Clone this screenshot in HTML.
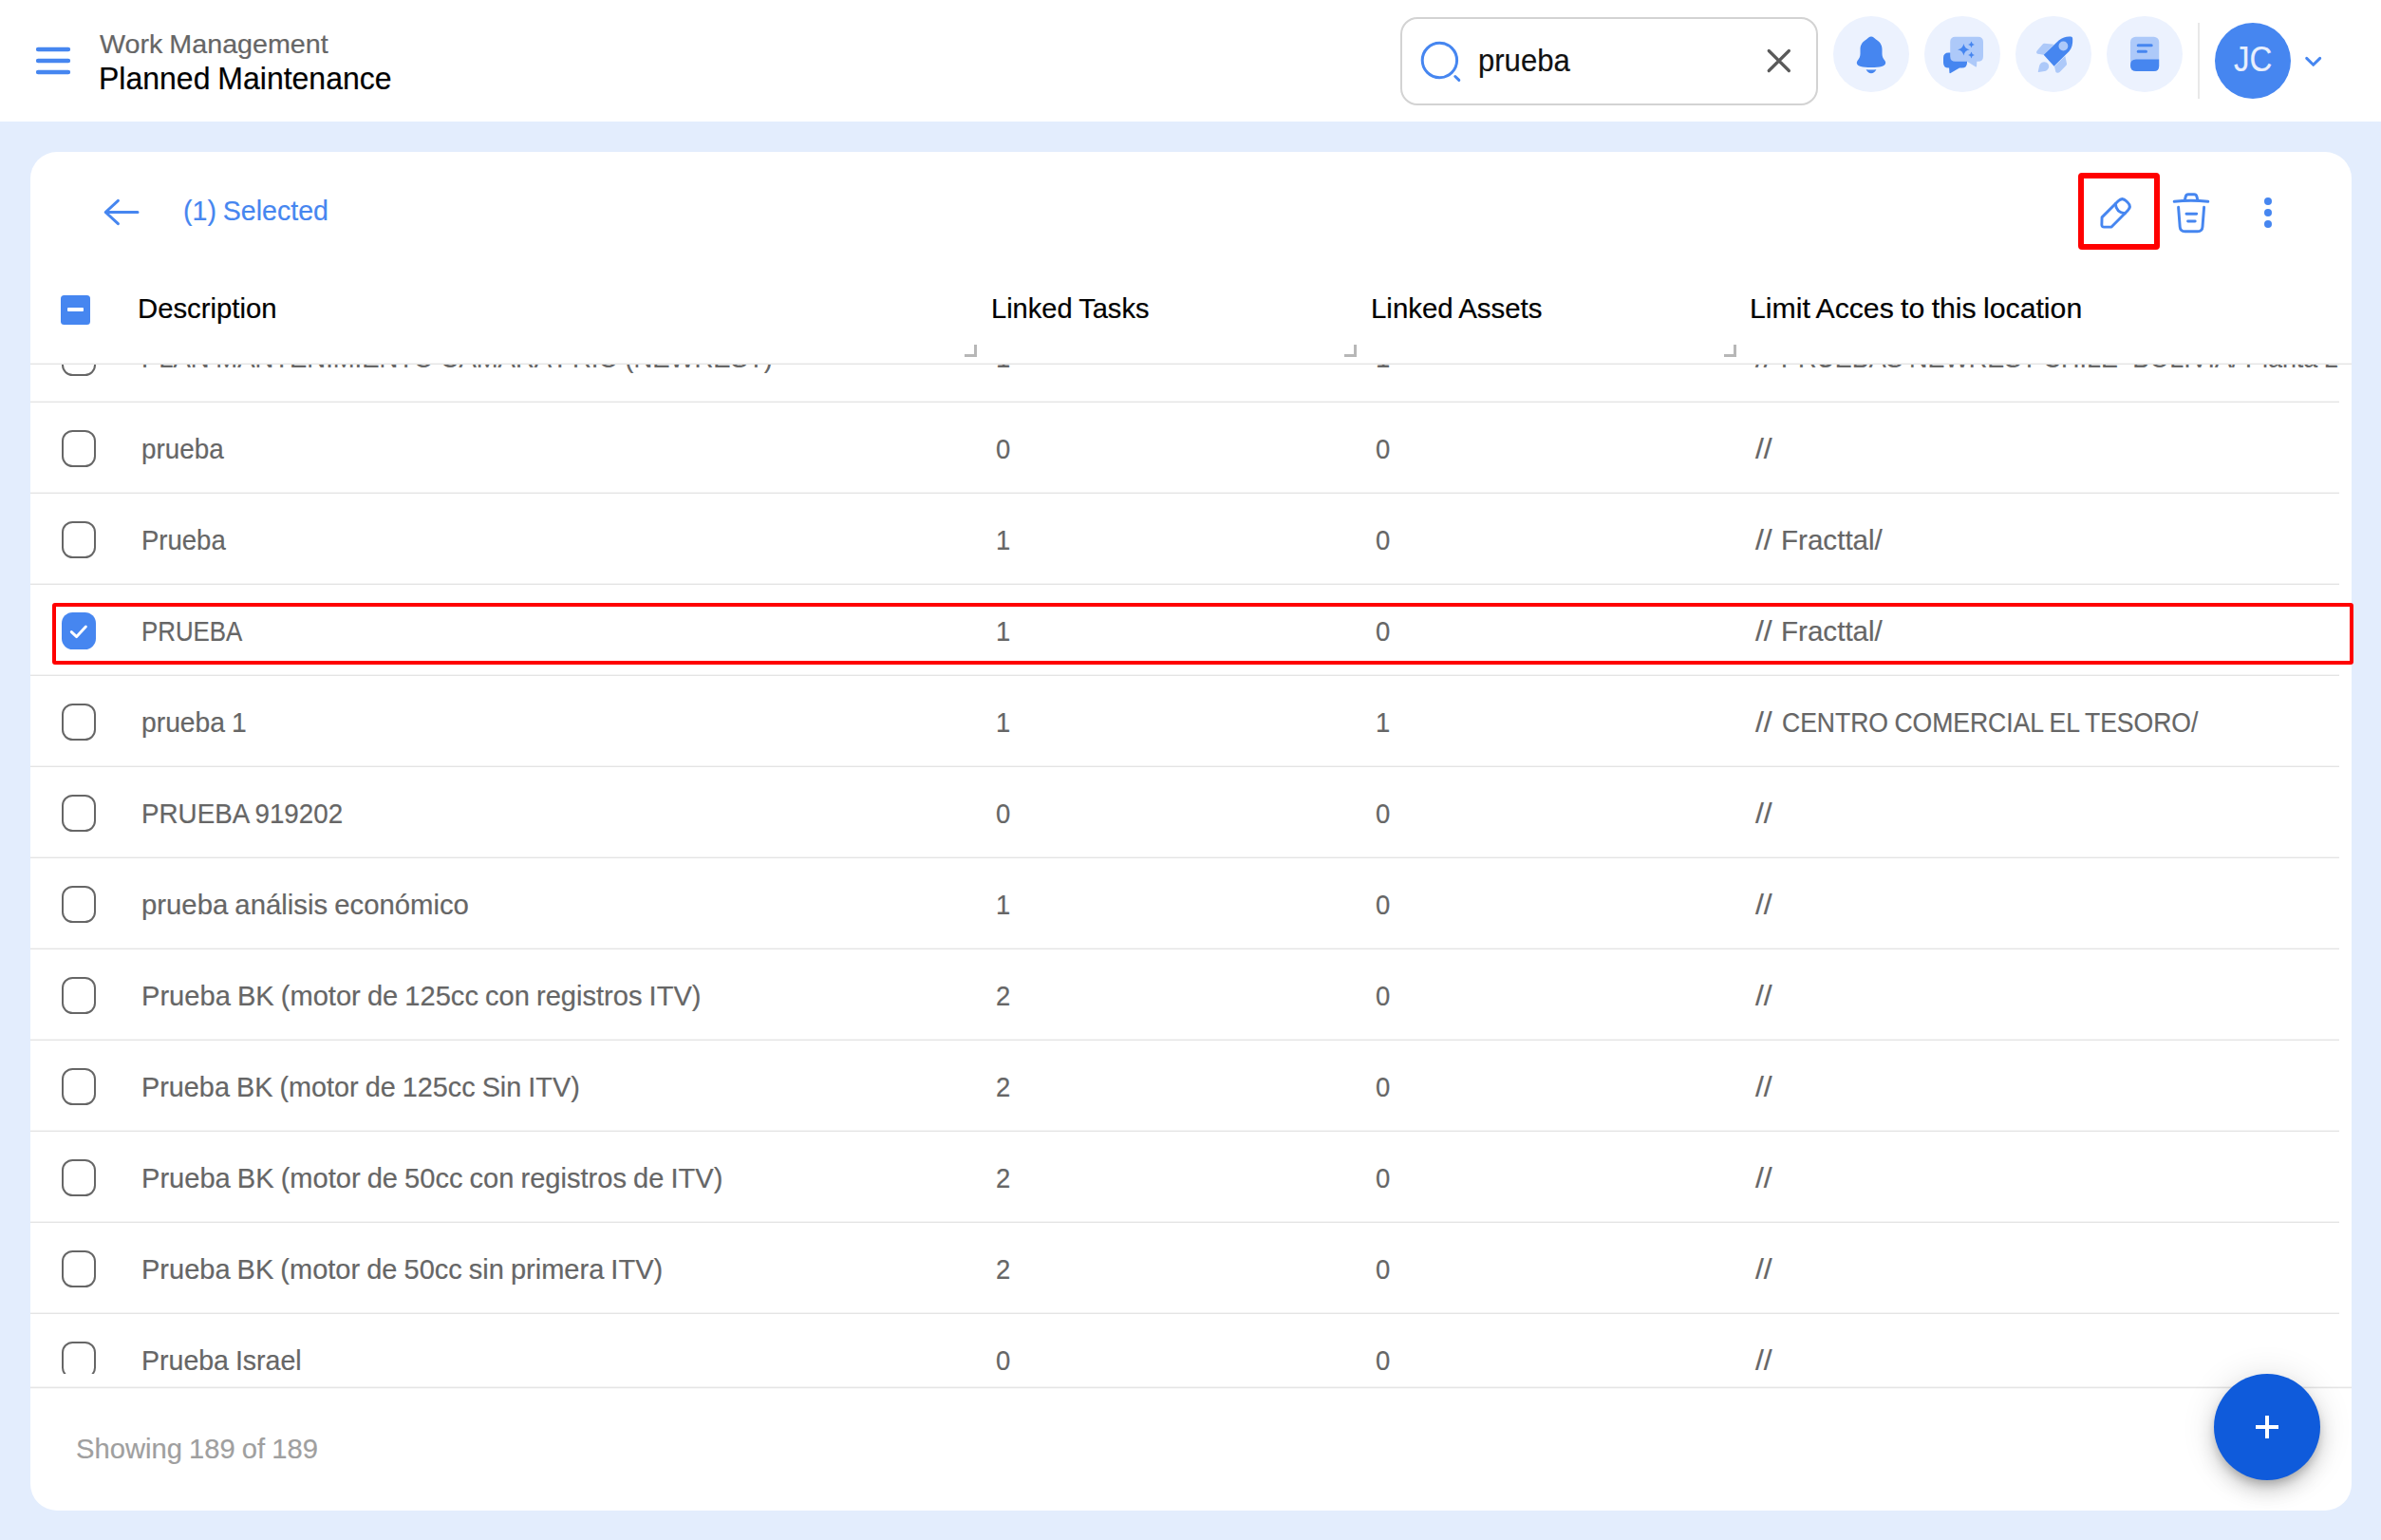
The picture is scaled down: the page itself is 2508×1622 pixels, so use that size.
<!DOCTYPE html>
<html lang="en">
<head>
<meta charset="utf-8">
<title>Planned Maintenance</title>
<style>
*{box-sizing:border-box;margin:0;padding:0}
html,body{width:2508px;height:1622px;overflow:hidden}
body{position:relative;background:#e3edfd;font-family:"Liberation Sans",sans-serif;color:#000}
.abs,.t,svg.i{position:absolute}
.t{white-space:nowrap;line-height:1;display:block;transform-origin:0 0;-webkit-text-stroke:.2px currentColor}
header{position:absolute;left:0;top:0;width:2508px;height:128px;background:#fff}
.search{position:absolute;left:1475px;top:17.5px;width:440px;height:93px;border:2px solid #d3d3d3;border-radius:18px;background:#fff}
.hc{position:absolute;top:17.1px;width:80px;height:80px}
.divider{position:absolute;left:2315px;top:24px;width:2px;height:80px;background:#e8e8e8}
.avatar{position:absolute;left:2333px;top:24px;width:80px;height:80px;border-radius:50%;background:#4686f0}
.card{position:absolute;left:32px;top:160px;width:2445px;height:1430.5px;border-radius:28px;background:#fff}
.hline{position:absolute;left:32px;width:2445px;height:2px;background:linear-gradient(#f5f5f5 50%,#e4e4e4 50%)}
.hline.f{height:3px;background:linear-gradient(#f5f5f5 33.3%,#e5e5e5 33.3% 66.6%,#f8f8f8 66.6%)}
.hcb{position:absolute;left:64.1px;top:310.7px;width:31px;height:31px;border-radius:3.5px;background:#4686f0}
.hcb i{position:absolute;left:6.7px;top:13.3px;width:17.6px;height:4.3px;background:#fff;border-radius:1px}
.rh{position:absolute;top:363px;width:12.800px;height:13px;border-right:3.900px solid #b7b7b7;border-bottom:3.900px solid #b7b7b7}
.tbody{position:absolute;left:0;top:0;width:2508px;height:1622px;clip-path:inset(384px 44px 175px 32px)}
.rows{position:absolute;left:32px;top:328px;width:2432px}
.row{position:absolute;left:0;width:2432px;height:96px;background:linear-gradient(#f5f5f5,#f5f5f5) 0 94px/100% 1px no-repeat,linear-gradient(#e4e4e4,#e4e4e4) 0 95px/100% 1px no-repeat}
.cb{position:absolute;left:33px;top:29.300px;width:36px;height:38.400px;border:2.2px solid #666;border-radius:11.5px;background:#fff}
.cb.on{border:0;background:#4686f0}
.cb svg{position:absolute;left:0;top:0}
.fab{position:absolute;left:2332.3px;top:1446.7px;width:112px;height:112px;border-radius:50%;background:#0f5bdb;box-shadow:0 6px 10px -2px rgba(0,0,0,.2),0 12px 20px 0 rgba(0,0,0,.14),0 2px 36px 0 rgba(0,0,0,.12)}
.fab i{position:absolute;background:#fff}
.hl{position:absolute;border-style:solid;border-color:#ff0000}
.t{word-spacing:-1.0px}
</style>
</head>
<body>
<header>
<svg class="i" style="left:32px;top:40.200px" width="48" height="48" viewBox="0 0 48 48"><path d="M8.100 12H39.900M8.100 24H39.900M8.100 36H39.900" stroke="#4686f0" stroke-width="4.500" stroke-linecap="round" fill="none"/></svg>
<span class="t" id="h1" style="left:105.4px;top:32.0px;font-size:28.3px;transform:scaleX(1.0135);color:#666;">Work Management</span>
<span class="t" id="h2" style="left:104.4px;top:66.7px;font-size:32.3px;transform:scaleX(0.9907);color:#000;">Planned Maintenance</span>
<div class="search">
<svg class="i" style="left:17px;top:21px" width="50" height="50" viewBox="0 0 50 50"><circle cx="22.4" cy="22.5" r="18.2" fill="none" stroke="#4686f0" stroke-width="3"/><path d="M38.800 39.500 42.800 43.400" stroke="#4686f0" stroke-width="3" stroke-linecap="round"/></svg>
<svg class="i" style="left:379px;top:26px" width="36" height="36" viewBox="0 0 36 36"><path d="M7.2 7.5 L28.4 28.5 M28.4 7.5 L7.2 28.5" stroke="#5a5a5a" stroke-width="3.2" stroke-linecap="round"/></svg>
</div>
<span class="t" id="q" style="left:1557.4px;top:47.5px;font-size:32.5px;transform:scaleX(0.9558);color:#111;">prueba</span>
<!-- bell -->
<svg class="hc" style="left:1931px" viewBox="-40 -40 80 80"><circle r="40" fill="#ecf2fe"/><path fill="#4686f0" d="M0-18.5C2-18.5 3.5-17 5-15.5 9-13 11.5-10 11.5-5V0C11.5 3 13 5 14.5 7 16 9.5 15 12 11 13 6 14.3-6 14.3-11 13-15 12-16 9.5-14.5 7-13 5-11.5 3-11.5 0V-5C-11.5-10-9-13-5-15.5-3.5-17-2-18.5 0-18.5Z"/><path fill="#4686f0" d="M-5.4 16.2Q0 17 5.4 16.2C4 19 2 20.2 0 20.2S-4 19-5.4 16.2Z"/></svg>
<!-- chat -->
<svg class="hc" style="left:2027px" viewBox="-40 -40 80 80"><circle r="40" fill="#ecf2fe"/><path fill="#4686f0" d="M-14.5-1.5H-0.5Q5-1.5 5 4V9Q5 14.5-0.5 14.5H-3L-12.4 20.1Q-13.6 20.6-13.6 19.3L-13.9 14.5H-14.5Q-20 14.5-20 9V4Q-20-1.5-14.500-1.5Z"/><path fill="#adc9f9" d="M-7.3-18.3H16.5Q22-18.3 22-12.800V2.3Q22 7.800 16.5 7.800H15.300L15.100 12.600Q15 13.900 13.800 13.300L5 7.800H-7.300Q-12.800 7.800-12.800 2.300V-12.800Q-12.800-18.300-7.300-18.300Z"/><path fill="#4686f0" d="M1.4-11Q2.300-5.600 7.700-4.700 2.300-3.800 1.400 1.600 .5-3.800-4.900-4.700 .5-5.600 1.400-11ZM9.500-13.500Q10-10.600 12.900-10.100 10-9.600 9.500-6.700 9-9.600 6.100-10.100 9-10.600 9.500-13.500ZM9.500-2.400Q10 .5 12.900 1 10 1.500 9.500 4.400 9 1.500 6.100 1 9 .5 9.500-2.400Z"/></svg>
<!-- rocket -->
<svg class="hc" style="left:2123px" viewBox="-40 -40 80 80"><circle r="40" fill="#ecf2fe"/><path fill="#adc9f9" d="M-9.500-11.300 .4-10.200-10.300 .8-16.500-.2Q-18.500-.6-17.800-2.800-17.500-3.500-16.500-4.500L-11.500-10.300Q-10.600-11.400-9.500-11.300ZM12.300 2 14 10Q14.200 11.100 13.500 11.800L6.500 19Q5.500 20 4 19.800 2.500 19.600 2.300 18.500L1 12.900ZM-15.600 18.900Q-16.500 19.400-16.100 17.700L-14.800 12C-13.700 7.800-8 6.600-5.500 10.500-3.700 13.500-5.500 17.200-9.500 18.100Z"/><path fill="#4686f0" d="M-10.300 .8 5.600-14.400C9.500-17.800 14-18.700 18-18.400 19.600-18.300 20.200-17.400 20.200-15.800 20.400-11 19.500-6.500 16.500-3L.6 12.800Z"/><circle cx="10.400" cy="-8.500" r="4.900" fill="#adc9f9"/></svg>
<!-- book -->
<svg class="hc" style="left:2219px" viewBox="-40 -40 80 80"><circle r="40" fill="#ecf2fe"/><rect x="-15" y="-18.300" width="30.200" height="36.300" rx="5.500" fill="#adc9f9"/><path fill="#4686f0" d="M15.200 5.500V12.500Q15.200 18 9.700 18H-9Q-15 18-15 11.800-15 5.500-9 5.500Z"/><path d="M-6.800-9.200H7.200M-6.800-2.800H1.500" stroke="#4686f0" stroke-width="3" stroke-linecap="round" fill="none"/></svg>
<div class="divider"></div>
<div class="avatar"></div>
<span class="t" id="jc" style="left:2352.7px;top:44.1px;font-size:37px;transform:scaleX(0.8919);color:#e8effd;">JC</span>
<svg class="i" style="left:2424px;top:54px" width="26" height="22" viewBox="0 0 26 22"><path d="M5.700 7.400 12.700 14.300 19.700 7.400" fill="none" stroke="#4686f0" stroke-width="3" stroke-linecap="round" stroke-linejoin="round"/></svg>
</header>
<main class="card"></main>
<!-- toolbar -->
<svg class="i" style="left:104px;top:204px" width="48" height="40" viewBox="0 0 48 40"><path d="M7.200 19.500H41M20.400 7.300 7.200 19.500 20.400 31.700" fill="none" stroke="#4686f0" stroke-width="3" stroke-linecap="round" stroke-linejoin="round"/></svg>
<span class="t" id="sel" style="left:192.6px;top:207.5px;font-size:28.9px;transform:scaleX(0.9881);color:#4686f0;">(1) Selected</span>
<!-- pencil -->
<svg class="i" style="left:2203.800px;top:200.600px" width="48" height="48" viewBox="-24 -24 48 48"><g transform="rotate(45)" fill="none" stroke="#4686f0" stroke-width="2.900" stroke-linecap="round" stroke-linejoin="round"><path d="M-7.100-11.600Q-7.100-17.600-1.100-17.600H1.100Q7.100-17.600 7.100-11.600V12.600L1.700 18.300Q0 20-1.700 18.300L-7.100 12.600Z"/><path d="M-7.100-7.500Q0-1.500 7.100-7.500"/></g></svg>
<!-- trash -->
<svg class="i" style="left:2284px;top:198px" width="48" height="52" viewBox="0 0 48 52"><g fill="none" stroke="#4686f0" stroke-width="2.950" stroke-linecap="round" stroke-linejoin="round"><path d="M6.200 14.300Q24 12.400 41.800 14.300"/><path d="M17.400 12.400 18.300 8.800Q18.900 6.700 21 6.700H27.200Q29.300 6.700 29.900 8.800L30.800 12.400"/><path d="M10.600 20.300 12.200 41Q12.600 45.800 17.500 45.800H30.800Q35.600 45.800 36 41L37.600 20.300"/><path d="M19 27.200H29.700M20.600 34.900H28.200"/></g></svg>
<!-- dots -->
<svg class="i" style="left:2381px;top:204px" width="16" height="40" viewBox="0 0 16 40"><circle cx="8" cy="8" r="4" fill="#4686f0"/><circle cx="8" cy="20" r="4" fill="#4686f0"/><circle cx="8" cy="32" r="4" fill="#4686f0"/></svg>
<!-- table header -->
<div class="hcb"><i></i></div>
<span class="t" id="c0" style="left:145.1px;top:310.5px;font-size:28.9px;transform:scaleX(1.0145);color:#000;">Description</span>
<span class="t" id="c1" style="left:1044.0px;top:310.5px;font-size:28.9px;transform:scaleX(1.0058);color:#000;">Linked Tasks</span>
<span class="t" id="c2" style="left:1444.0px;top:310.5px;font-size:28.9px;transform:scaleX(1.0181);color:#000;">Linked Assets</span>
<span class="t" id="c3" style="left:1843.4px;top:310.5px;font-size:28.9px;transform:scaleX(1.0459);color:#000;">Limit Acces to this location</span>
<i class="rh" style="left:1016px"></i><i class="rh" style="left:1416px"></i><i class="rh" style="left:1816px"></i>
<div class="hline" style="top:382px"></div>
<section class="tbody">
<div class="rows">
<div class="row" style="top:0px"><span class="cb"></span></div>
<div class="row" style="top:96px"><span class="cb"></span></div>
<div class="row" style="top:192px"><span class="cb"></span></div>
<div class="row" style="top:288px"><span class="cb on"><svg viewBox="0 0 36 38.2" width="36" height="38.2"><path d="M10.3 20.600 15.700 25.600 25.400 15.100" fill="none" stroke="#fff" stroke-width="2.900" stroke-linecap="round" stroke-linejoin="round"/></svg></span></div>
<div class="row" style="top:384px"><span class="cb"></span></div>
<div class="row" style="top:480px"><span class="cb"></span></div>
<div class="row" style="top:576px"><span class="cb"></span></div>
<div class="row" style="top:672px"><span class="cb"></span></div>
<div class="row" style="top:768px"><span class="cb"></span></div>
<div class="row" style="top:864px"><span class="cb"></span></div>
<div class="row" style="top:960px"><span class="cb"></span></div>
<div class="row" style="top:1056px"><span class="cb"></span></div>
</div>
<span class="t rowt" id="r0d" style="left:148.8px;top:362.5px;font-size:28.9px;transform:scaleX(0.9495);color:#666666;">PLAN MANTENIMIENTO CAMARA FRIO (NEWREST)</span>
<span class="t rowt" id="r0a" style="left:1048.9px;top:362.5px;font-size:28.9px;transform:scaleX(0.9500);color:#666666;">1</span>
<span class="t rowt" id="r0b" style="left:1448.9px;top:362.5px;font-size:28.9px;transform:scaleX(0.9500);color:#666666;">1</span>
<span class="t rowt" id="r0l" style="left:1849.0px;top:362.5px;font-size:28.9px;transform:scaleX(1.1036);color:#666666;">//</span>
<span class="t rowt" id="r0m" style="left:1875.8px;top:362.5px;font-size:28.9px;transform:scaleX(0.9310);color:#666666;">PRUEBAS NEWREST CHILE- BOLIVIA/ Planta La Paz/</span>
<span class="t rowt" id="r1d" style="left:149.2px;top:458.5px;font-size:28.9px;transform:scaleX(0.9633);color:#666666;">prueba</span>
<span class="t rowt" id="r1a" style="left:1049.3px;top:458.5px;font-size:28.9px;transform:scaleX(0.9500);color:#666666;">0</span>
<span class="t rowt" id="r1b" style="left:1449.3px;top:458.5px;font-size:28.9px;transform:scaleX(0.9500);color:#666666;">0</span>
<span class="t rowt" id="r1l" style="left:1849.0px;top:458.5px;font-size:28.9px;transform:scaleX(1.1036);color:#666666;">//</span>
<span class="t rowt" id="r2d" style="left:148.8px;top:554.5px;font-size:28.9px;transform:scaleX(0.9522);color:#666666;">Prueba</span>
<span class="t rowt" id="r2a" style="left:1048.9px;top:554.5px;font-size:28.9px;transform:scaleX(0.9500);color:#666666;">1</span>
<span class="t rowt" id="r2b" style="left:1449.3px;top:554.5px;font-size:28.9px;transform:scaleX(0.9500);color:#666666;">0</span>
<span class="t rowt" id="r2l" style="left:1849.0px;top:554.5px;font-size:28.9px;transform:scaleX(1.1036);color:#666666;">//</span>
<span class="t rowt" id="r2m" style="left:1875.7px;top:554.5px;font-size:28.9px;transform:scaleX(1.0239);color:#666666;">Fracttal/</span>
<span class="t rowt" id="r3d" style="left:148.9px;top:650.5px;font-size:28.9px;transform:scaleX(0.8950);color:#666666;">PRUEBA</span>
<span class="t rowt" id="r3a" style="left:1048.9px;top:650.5px;font-size:28.9px;transform:scaleX(0.9500);color:#666666;">1</span>
<span class="t rowt" id="r3b" style="left:1449.3px;top:650.5px;font-size:28.9px;transform:scaleX(0.9500);color:#666666;">0</span>
<span class="t rowt" id="r3l" style="left:1849.0px;top:650.5px;font-size:28.9px;transform:scaleX(1.1036);color:#666666;">//</span>
<span class="t rowt" id="r3m" style="left:1875.7px;top:650.5px;font-size:28.9px;transform:scaleX(1.0239);color:#666666;">Fracttal/</span>
<span class="t rowt" id="r4d" style="left:149.2px;top:746.5px;font-size:28.9px;transform:scaleX(0.9784);color:#666666;">prueba 1</span>
<span class="t rowt" id="r4a" style="left:1048.9px;top:746.5px;font-size:28.9px;transform:scaleX(0.9500);color:#666666;">1</span>
<span class="t rowt" id="r4b" style="left:1448.9px;top:746.5px;font-size:28.9px;transform:scaleX(0.9500);color:#666666;">1</span>
<span class="t rowt" id="r4l" style="left:1849.0px;top:746.5px;font-size:28.9px;transform:scaleX(1.1036);color:#666666;">//</span>
<span class="t rowt" id="r4m" style="left:1876.8px;top:746.5px;font-size:28.9px;transform:scaleX(0.9179);color:#666666;">CENTRO COMERCIAL EL TESORO/</span>
<span class="t rowt" id="r5d" style="left:148.8px;top:842.5px;font-size:28.9px;transform:scaleX(0.9614);color:#666666;">PRUEBA 919202</span>
<span class="t rowt" id="r5a" style="left:1049.3px;top:842.5px;font-size:28.9px;transform:scaleX(0.9500);color:#666666;">0</span>
<span class="t rowt" id="r5b" style="left:1449.3px;top:842.5px;font-size:28.9px;transform:scaleX(0.9500);color:#666666;">0</span>
<span class="t rowt" id="r5l" style="left:1849.0px;top:842.5px;font-size:28.9px;transform:scaleX(1.1036);color:#666666;">//</span>
<span class="t rowt" id="r6d" style="left:149.2px;top:938.5px;font-size:28.9px;transform:scaleX(1.0142);color:#666666;">prueba análisis económico</span>
<span class="t rowt" id="r6a" style="left:1048.9px;top:938.5px;font-size:28.9px;transform:scaleX(0.9500);color:#666666;">1</span>
<span class="t rowt" id="r6b" style="left:1449.3px;top:938.5px;font-size:28.9px;transform:scaleX(0.9500);color:#666666;">0</span>
<span class="t rowt" id="r6l" style="left:1849.0px;top:938.5px;font-size:28.9px;transform:scaleX(1.1036);color:#666666;">//</span>
<span class="t rowt" id="r7d" style="left:148.7px;top:1034.5px;font-size:28.9px;transform:scaleX(1.0069);color:#666666;">Prueba BK (motor de 125cc con registros ITV)</span>
<span class="t rowt" id="r7a" style="left:1049.3px;top:1034.5px;font-size:28.9px;transform:scaleX(0.9500);color:#666666;">2</span>
<span class="t rowt" id="r7b" style="left:1449.3px;top:1034.5px;font-size:28.9px;transform:scaleX(0.9500);color:#666666;">0</span>
<span class="t rowt" id="r7l" style="left:1849.0px;top:1034.5px;font-size:28.9px;transform:scaleX(1.1036);color:#666666;">//</span>
<span class="t rowt" id="r8d" style="left:148.7px;top:1130.5px;font-size:28.9px;transform:scaleX(0.9975);color:#666666;">Prueba BK (motor de 125cc Sin ITV)</span>
<span class="t rowt" id="r8a" style="left:1049.3px;top:1130.5px;font-size:28.9px;transform:scaleX(0.9500);color:#666666;">2</span>
<span class="t rowt" id="r8b" style="left:1449.3px;top:1130.5px;font-size:28.9px;transform:scaleX(0.9500);color:#666666;">0</span>
<span class="t rowt" id="r8l" style="left:1849.0px;top:1130.5px;font-size:28.9px;transform:scaleX(1.1036);color:#666666;">//</span>
<span class="t rowt" id="r9d" style="left:148.7px;top:1226.5px;font-size:28.9px;transform:scaleX(1.0061);color:#666666;">Prueba BK (motor de 50cc con registros de ITV)</span>
<span class="t rowt" id="r9a" style="left:1049.3px;top:1226.5px;font-size:28.9px;transform:scaleX(0.9500);color:#666666;">2</span>
<span class="t rowt" id="r9b" style="left:1449.3px;top:1226.5px;font-size:28.9px;transform:scaleX(0.9500);color:#666666;">0</span>
<span class="t rowt" id="r9l" style="left:1849.0px;top:1226.5px;font-size:28.9px;transform:scaleX(1.1036);color:#666666;">//</span>
<span class="t rowt" id="r10d" style="left:148.7px;top:1322.5px;font-size:28.9px;transform:scaleX(1.0040);color:#666666;">Prueba BK (motor de 50cc sin primera ITV)</span>
<span class="t rowt" id="r10a" style="left:1049.3px;top:1322.5px;font-size:28.9px;transform:scaleX(0.9500);color:#666666;">2</span>
<span class="t rowt" id="r10b" style="left:1449.3px;top:1322.5px;font-size:28.9px;transform:scaleX(0.9500);color:#666666;">0</span>
<span class="t rowt" id="r10l" style="left:1849.0px;top:1322.5px;font-size:28.9px;transform:scaleX(1.1036);color:#666666;">//</span>
<span class="t rowt" id="r11d" style="left:148.7px;top:1418.5px;font-size:28.9px;transform:scaleX(0.9873);color:#666666;">Prueba Israel</span>
<span class="t rowt" id="r11a" style="left:1049.3px;top:1418.5px;font-size:28.9px;transform:scaleX(0.9500);color:#666666;">0</span>
<span class="t rowt" id="r11b" style="left:1449.3px;top:1418.5px;font-size:28.9px;transform:scaleX(0.9500);color:#666666;">0</span>
<span class="t rowt" id="r11l" style="left:1849.0px;top:1418.5px;font-size:28.9px;transform:scaleX(1.1036);color:#666666;">//</span>
</section>
<div class="hline f" style="top:1460px"></div>
<span class="t" id="foot" style="left:79.6px;top:1512.2px;font-size:28.9px;transform:scaleX(1.0102);color:#9f9f9f;">Showing 189 of 189</span>
<div class="fab"><i style="left:44px;top:54px;width:24px;height:4.200px"></i><i style="left:54px;top:44px;width:4.200px;height:24px"></i></div>
<div class="hl" style="left:2189px;top:182px;width:86px;height:81px;border-width:6px;border-radius:4px"></div>
<div class="hl" style="left:55.300px;top:635.200px;width:2424.200px;height:65px;border-width:4.500px;border-radius:3px"></div>

</body>
</html>
